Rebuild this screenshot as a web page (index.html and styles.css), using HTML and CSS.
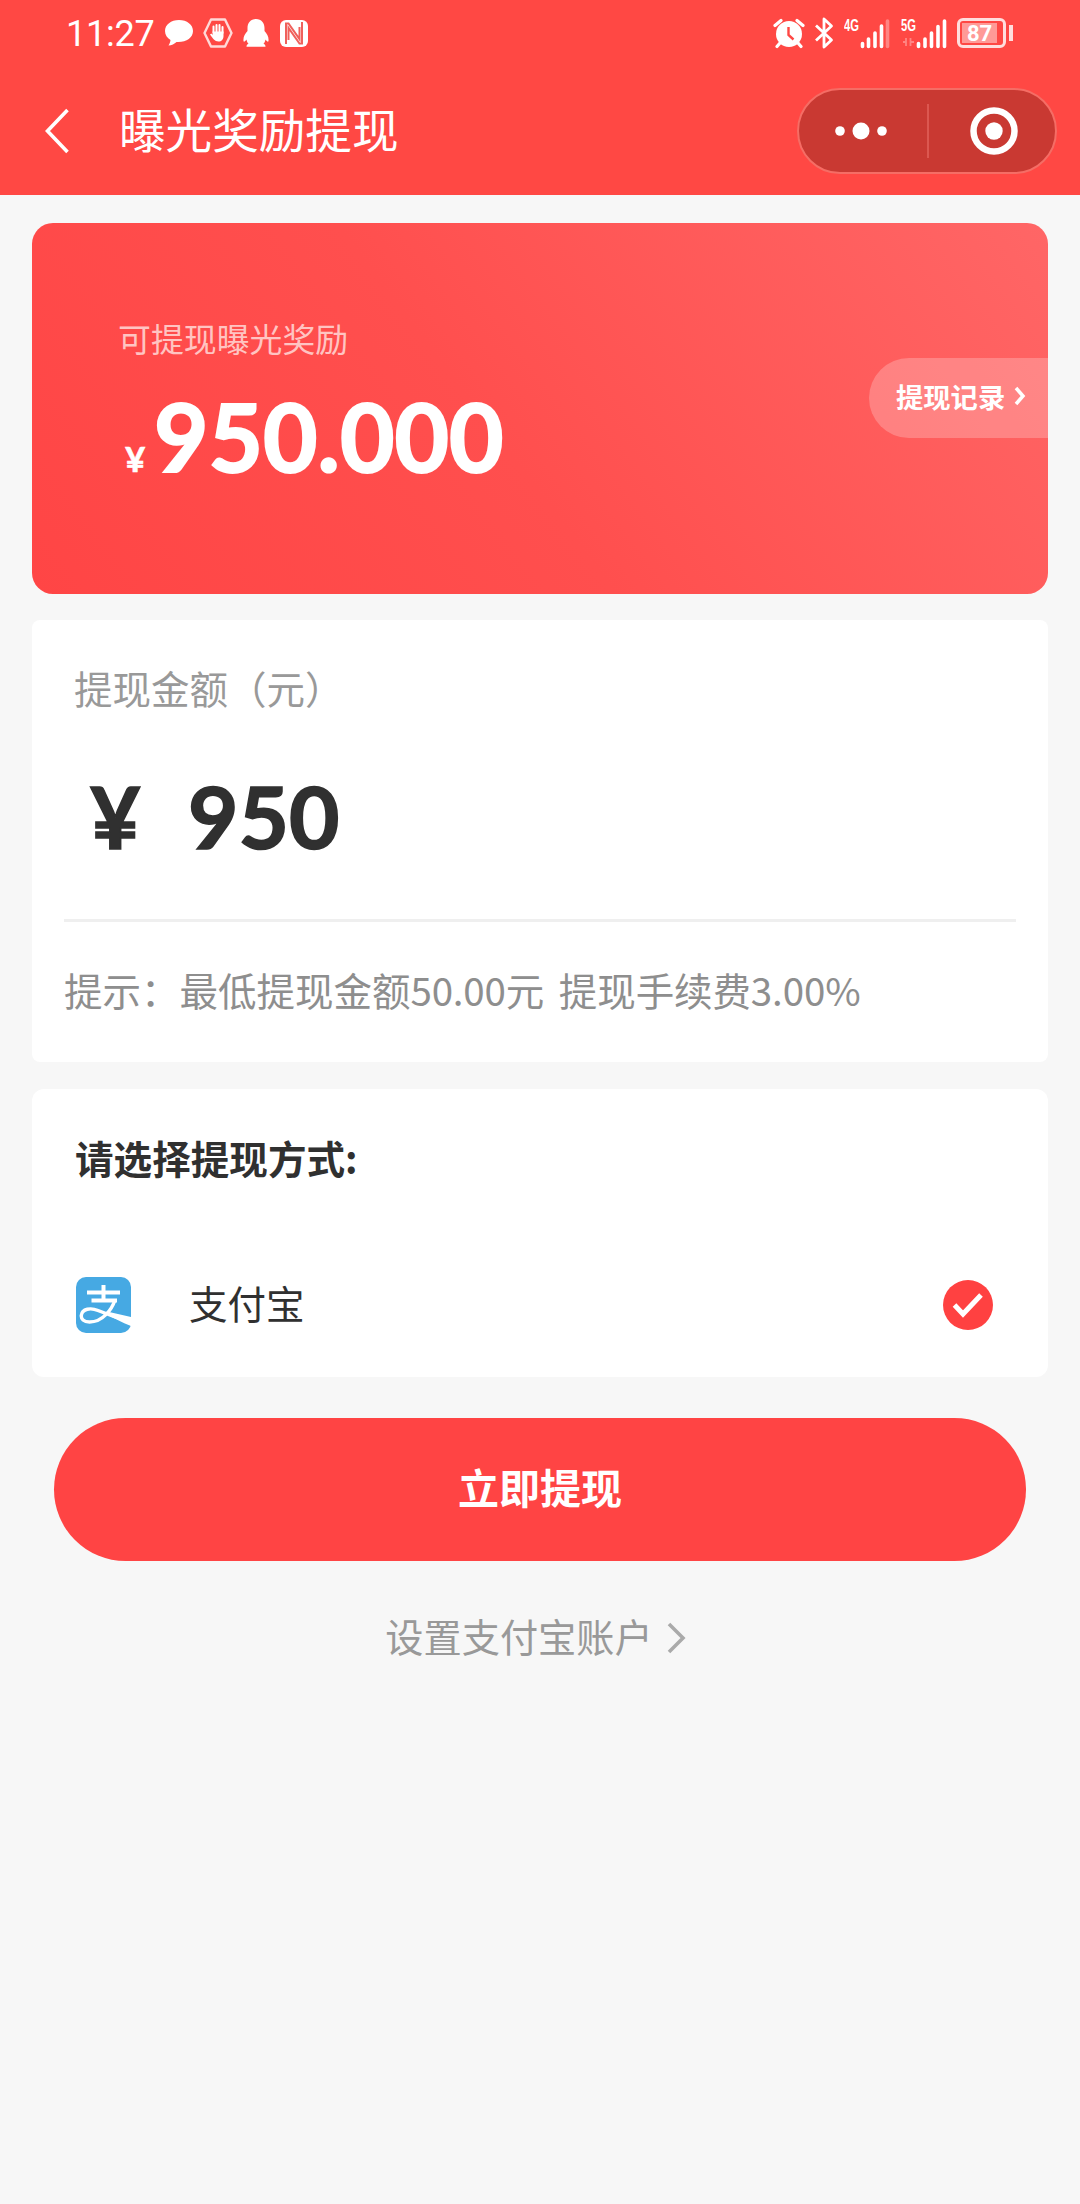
FILE: index.html
```html
<!DOCTYPE html>
<html lang="zh-CN">
<head>
<meta charset="utf-8">
<title>曝光奖励提现</title>
<link rel="stylesheet" href="styles.css">
</head>
<body>
<header class="top">
  <div class="status">
    <div class="status-left">
      <span class="time">11:27</span>
      <svg width="30" height="32" viewBox="0 0 30 32"><path d="M15 3C7 3 1 7.700 1 14c0 4 2.200 7 5.500 9-.2 2.200-1 4-2 5.500 3-.4 6-1.600 8-3.600C22 25.500 29 21 29 14 29 7.700 23 3 15 3Z" fill="#fff"/></svg>
      <svg width="30" height="32" viewBox="0 0 30 32"><path d="M8 2.500h14L28.500 16 22 29.500H8L1.500 16Z" fill="none" stroke="#ffd9d8" stroke-width="2.400" stroke-linejoin="round"/><path d="M10.500 16V9.500M13.500 15V8M16.500 15V8M19.500 16V10" stroke="#fff" stroke-width="2" stroke-linecap="round"/><path d="M9.500 14.500h11V19c0 3.500-2 5.500-5 5.500-4 0-5.500-3-8.500-7 1-1.500 2.500-.5 3 .5Z" fill="#fff"/></svg>
      <svg width="28" height="32" viewBox="0 0 28 32"><path d="M14 2c-5.500 0-8.500 4-8.500 9v3C3 17 1 20 1.500 24c.3 1.500 1.500.5 3-1.500.3 2 1 3.300 2 4.300-1.500.7-2 1.700-2 3h19c0-1.300-.5-2.300-2-3 1-1 1.700-2.300 2-4.300 1.500 2 2.700 3 3 1.500.5-4-1.500-7-4-10v-3C22.500 6 19.500 2 14 2Z" fill="#fff"/></svg>
      <svg width="30" height="32" viewBox="0 0 30 32"><rect x="1" y="3" width="28" height="27" rx="6" fill="#fff"/><path d="M7 27V6.500h2.500L20.500 22V10M23 5v21.500h-2.500L9.500 11V23" fill="none" stroke="#f0605b" stroke-width="2"/></svg>
    </div>
    <div class="status-right">
      <svg class="alarm" width="32" height="32" viewBox="0 0 32 32"><circle cx="16" cy="17" r="13" fill="#fff"/><path d="M2 8.500 8 3.500M30 8.500 24 3.500M7 26l-3 3.500M25 26l3 3.500" stroke="#fff" stroke-width="3.200" stroke-linecap="round"/><path d="M15.500 10v8l5 4.500" fill="none" stroke="#ff4844" stroke-width="2.400"/></svg>
      <svg class="bluetooth" width="20" height="34" viewBox="0 0 20 34"><path d="M2 9.500 17.500 24 10 31V3l7.500 7L2 24.500" fill="none" stroke="#fff" stroke-width="2.800" stroke-linejoin="round"/></svg>
      <div class="signal">
        <span class="net">4G</span>
        <svg width="47" height="32" viewBox="0 0 47 32"><path d="M18.500 29.500v-3M24.500 29.500V22M31 29.500V16M37.500 29.500V9" stroke="#fff" stroke-width="3.600" stroke-linecap="round"/><path d="M43.500 29.500V4" stroke="#ff8583" stroke-width="3.600" stroke-linecap="round"/></svg>
      </div>
      <div class="signal second">
        <span class="net">5G</span>
        <svg width="47" height="32" viewBox="0 0 47 32"><path d="M2 25h3v-4M5 21v8M9.500 21v8M13 25h-3" fill="none" stroke="#ff8583" stroke-width="1.800"/><path d="M17.500 29.500v-3M24 29.500V22M30.500 29.500V16M37 29.500v-20M43.500 29.500V4" stroke="#fff" stroke-width="3.600" stroke-linecap="round"/></svg>
      </div>
      <div class="battery"><span class="charge">87</span></div>
      <i class="battery-tip"></i>
    </div>
  </div>
  <nav class="nav">
    <svg class="back" width="26" height="48" viewBox="0 0 26 48"><path d="M23.500 3 3.500 24 23.500 45" fill="none" stroke="#fff" stroke-width="3.600"/></svg>
    <h1 class="title">曝光奖励提现</h1>
    <div class="capsule">
      <svg width="128" height="82" viewBox="0 0 128 82" fill="#fff"><circle cx="41" cy="41" r="4.800"/><circle cx="62" cy="41" r="8.500"/><circle cx="83" cy="41" r="4.800"/></svg>
      <i class="capsule-line"></i>
      <svg width="126" height="82" viewBox="0 0 126 82"><circle cx="65" cy="41" r="20.500" fill="none" stroke="#fff" stroke-width="6.500"/><circle cx="65" cy="41" r="8.700" fill="#fff"/></svg>
    </div>
  </nav>
</header>
<main class="content">
  <section class="balance">
    <div class="balance-info">
      <div class="balance-label">可提现曝光奖励</div>
      <div class="balance-value"><span class="yen">¥</span><span class="number">950.000</span></div>
    </div>
    <a class="records">提现记录<svg width="14" height="20" viewBox="0 0 14 20"><path d="m3 2 7 8-7 8" fill="none" stroke="#fff" stroke-width="3.500"/></svg></a>
  </section>
  <section class="amount">
    <div class="amount-label">提现金额（元）</div>
    <div class="amount-input"><span class="amount-yen">¥</span><span>950</span></div>
    <p class="tip">提示：最低提现金额<span class="tip-num">50.00</span>元 <span class="tip-fee">提现手续费3.00%</span></p>
  </section>
  <section class="method">
    <h2 class="method-title">请选择提现方式:</h2>
    <div class="option">
      <svg class="alipay" width="55" height="56" viewBox="0 0 55 56"><rect width="55" height="56" rx="10" fill="#46a9e3"/><path d="M27.500 8v15M11 15.500h33M15.500 23.500H41" fill="none" stroke="#fff" stroke-width="4"/><path d="M39 23C36 32 27 45 13.500 45 7.500 45 5 42 5.300 38.500 6 31.500 15 30.500 22 33.500 33 38 43 41.500 55 45" fill="none" stroke="#fff" stroke-width="3.400"/><path d="M31 34.500 55 40v9C46 45.500 37 40.500 29 36.500Z" fill="#fff"/></svg>
      <span class="option-name">支付宝</span>
      <svg width="50" height="50" viewBox="0 0 50 50"><circle cx="25" cy="25" r="25" fill="#ff4141"/><path d="m11.500 25 8.500 9L38 15" fill="none" stroke="#fff" stroke-width="5"/></svg>
    </div>
  </section>
  <button class="submit">立即提现</button>
  <a class="account">设置支付宝账户<svg width="20" height="34" viewBox="0 0 20 34"><path d="m2 3 14 14L2 31" fill="none" stroke="#aaa" stroke-width="3.600"/></svg></a>
</main>
</body>
</html>
```
FILE: styles.css
```css
* { box-sizing: border-box; }
body {
  margin: 0;
  min-height: 2204px;
  background: #f7f7f7;
  color: #303030;
  font-family: "Noto Sans CJK SC", sans-serif;
}
svg { display: block; flex: none; }
.top { height: 195px; background: #ff4844; color: #fff; }
.status {
  display: flex;
  justify-content: space-between;
  height: 66px;
  padding: 0 67px 0 66px;
}
.status-left, .status-right { display: flex; align-items: center; }
.status-left { gap: 9px; }
.time { width: 89px; padding-top: 2px; font: 36px/66px Roboto, sans-serif; letter-spacing: -0.2px; }
.bluetooth { margin: 0 10px 0 9px; }
.signal { position: relative; }
.second { margin-left: 10px; }
.net {
  position: absolute;
  left: 0;
  top: 0;
  font: bold 17px/18px "Liberation Sans", sans-serif;
  transform: scaleX(.66);
  transform-origin: left;
}
.battery {
  display: flex;
  width: 49px;
  height: 30px;
  margin-left: 9px;
  padding: 2px;
  border: 3px solid #ffdedd;
  border-radius: 6px;
}
.charge {
  width: 35px;
  background: #ff9a97;
  font: bold 22px/21px Roboto, sans-serif;
  text-align: center;
}
.battery-tip { width: 4px; height: 16px; margin-left: 3px; background: #ffdedd; }
.nav { display: flex; align-items: center; height: 129px; padding: 0 23px 0 44px; }
.back { margin-right: 49px; }
.title { flex: 1; margin: -5px 0 0; font-size: 46.600px; font-weight: 400; line-height: 60px; }
.capsule {
  display: flex;
  align-items: center;
  width: 260px;
  height: 86px;
  border: 2px solid #f56d65;
  border-radius: 43px;
  background: #c93932;
}
.nav .back { margin-top: 1px; }
.capsule-line { width: 2px; height: 54px; background: #dc5750; }
.content { display: flex; flex-direction: column; padding: 28px 32px 0; }
.balance {
  display: flex;
  justify-content: space-between;
  height: 371px;
  border-radius: 21px;
  background: linear-gradient(53deg, #ff4545, #ff4f4e 45%, #ff6666);
  color: #fff;
  overflow: hidden;
}
.balance-info { padding: 95px 0 0 86px; }
.balance-label { font-size: 32.900px; line-height: 40px; color: #ffc4c2; }
.balance-value {
  display: flex;
  align-items: baseline;
  margin-top: 18px;
  font: bold 94px/120px Lato, sans-serif;
}
.yen { width: 36px; padding-left: 7px; font-size: 35px; -webkit-text-stroke: .6px #fff; }
.number { -webkit-text-stroke: 2px #fff; }
.records {
  display: flex;
  align-items: center;
  gap: 8px;
  width: 179px;
  height: 80px;
  margin-top: 135px;
  padding: 0 0 5px 27px;
  border-radius: 40px 0 0 40px;
  background: rgba(255, 255, 255, .23);
  font-size: 27.300px;
  font-weight: 700;
}
.amount { height: 442px; margin-top: 26px; padding: 0 32px; border-radius: 8px; background: #fff; }
.amount-label { padding: 42px 0 0 10px; font-size: 38.500px; line-height: 50px; color: #999; }
.amount-input {
  display: flex;
  height: 210px;
  padding: 54px 0 0 26px;
  border-bottom: 3px solid #efefef;
  font: bold 87px/100px Lato, sans-serif;
  -webkit-text-stroke: 1.600px #303030;
}
.amount-yen { width: 98px; }
.tip { margin: 42px 0 0; font-size: 38.500px; line-height: 50px; color: #8e8e8e; white-space: nowrap; }
.tip-num { letter-spacing: -.2px; }
.tip-fee { margin-left: 6px; letter-spacing: -.1px; }
.method { height: 288px; margin-top: 27px; padding: 43px 55px 0 43px; border-radius: 12px; background: #fff; }
.method-title { margin: 0; font-size: 38.600px; font-weight: 700; line-height: 50px; }
.option { display: flex; align-items: center; height: 56px; margin-top: 95px; }
.alipay { margin-left: 1px; }
.option-name { flex: 1; margin: -7px 0 0 58px; font-size: 38.500px; line-height: 50px; }
.submit {
  height: 143px;
  margin: 41px 22px 0;
  padding: 0 0 8px;
  border: 0;
  border-radius: 72px;
  background: #ff4444;
  color: #fff;
  font: bold 41px/60px "Noto Sans CJK SC", sans-serif;
}
.account {
  display: flex;
  align-items: center;
  justify-content: center;
  gap: 14px;
  height: 50px;
  margin: 50px 8px 0 0;
  font-size: 38.200px;
  line-height: 50px;
  color: #999;
}
.account svg { margin-top: 3px; }
```
